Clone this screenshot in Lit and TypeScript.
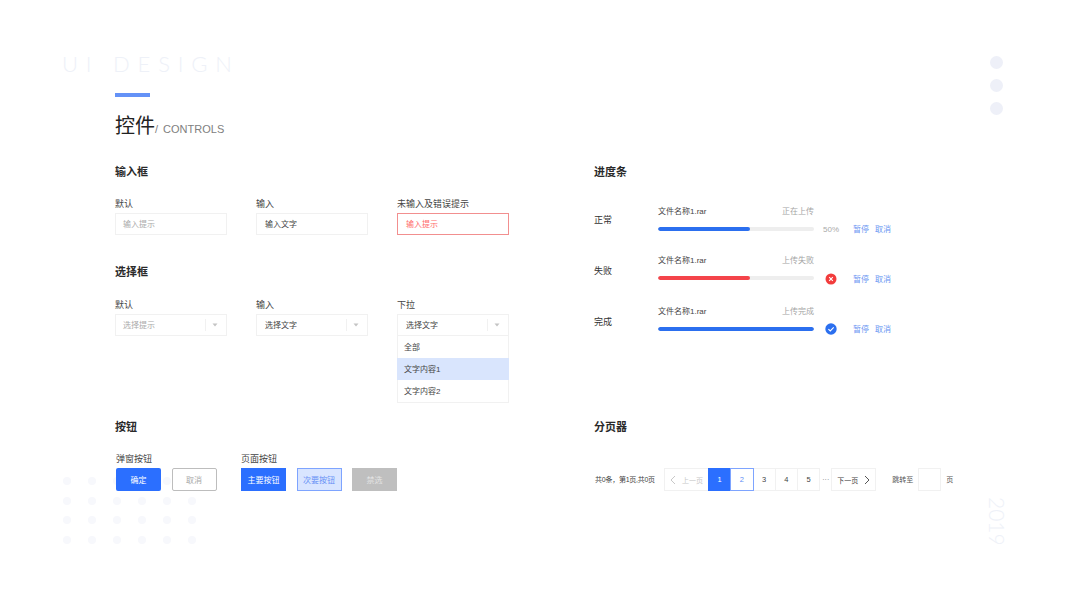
import { LitElement, html, css } from "lit";
import { customElement } from "lit/decorators.js";

const caret = html`<svg class="caret" width="6" height="4" viewBox="0 0 6 4"><path d="M0.5 0.5h5L3 3.5z" fill="#c4c4c4"/></svg>`;
const chevL = html`<svg width="6" height="10" viewBox="0 0 6 10"><path d="M5 1L1 5l4 4" fill="none" stroke="#c8c8c8" stroke-width="1"/></svg>`;
const chevR = html`<svg width="6" height="10" viewBox="0 0 6 10"><path d="M1 1l4 4-4 4" fill="none" stroke="#555" stroke-width="1"/></svg>`;
const errIcon = html`<svg width="12" height="12" viewBox="0 0 12 12"><circle cx="6" cy="6" r="5.5" fill="#f23c3c"/><path d="M4.2 4.2l3.6 3.6M7.8 4.2l-3.6 3.6" stroke="#fff" stroke-width="1.1"/></svg>`;
const okIcon = html`<svg width="12" height="12" viewBox="0 0 12 12"><circle cx="6" cy="6" r="5.7" fill="#2b6fef"/><path d="M3.4 6.1l1.9 1.9 3.4-3.6" fill="none" stroke="#fff" stroke-width="1.1"/></svg>`;

@customElement("app-root")
export class AppRoot extends LitElement {
  static styles = css`
    :host {
      display: block;
      position: relative;
      width: 1067px;
      height: 600px;
      overflow: hidden;
      background: #fff;
      font-family: "Liberation Sans", "Noto Sans CJK SC", sans-serif;
      color: #444;
    }
    .deco { position: absolute; }
    .brand {
      left: 62px; top: 50px;
      font: 300 22px/28px Lato, "Liberation Sans", sans-serif;
      letter-spacing: 7.8px;
      color: #eef1f8;
      white-space: pre;
    }
    .dots3 { left: 990px; top: 56px; display: flex; flex-direction: column; gap: 10px; }
    .dots3 i { display: block; width: 13px; height: 13px; border-radius: 50%; background: #eef0f8; }
    .year {
      left: 986px; top: 497px;
      writing-mode: vertical-rl;
      font: 300 21px/22px Lato, "Liberation Sans", sans-serif;
      color: #eef1f8;
    }
    .grid-dots {
      left: 63px; top: 477px;
      display: grid;
      grid-template-columns: repeat(6, 8px);
      grid-auto-rows: 8px;
      column-gap: 17px;
      row-gap: 11.7px;
    }
    .grid-dots i { border-radius: 50%; background: #f7f8fc; }

    .page { position: relative; padding: 93px 0 0 115px; }
    .bar { width: 35px; height: 4px; background: #6492f7; }
    .head { display: flex; align-items: baseline; height: 30px; margin-top: 14px; line-height: 30px; }
    .head b { font-weight: 400; font-size: 20px; color: #222; }
    .head span { font-size: 11px; color: #808080; word-spacing: 2px; }
    .main {
      display: grid;
      grid-template-columns: 479px 400px;
      margin-top: 23px;
    }
    h2 { margin: 0; font-size: 11px; line-height: 16px; font-weight: 700; color: #2a2a2a; }
    .mt29 { margin-top: 29px; }
    .mt17 { margin-top: 16px; }
    .fields { display: grid; grid-template-columns: repeat(3, 111.5px); column-gap: 29.5px; margin-top: 17px; }
    .fields.sel { margin-top: 18px; }
    .lab { font-size: 9px; line-height: 14px; color: #444; margin-bottom: 2px; white-space: nowrap; }
    .box {
      box-sizing: border-box;
      height: 22px;
      border: 1px solid #f1f1f1;
      display: flex;
      align-items: center;
      font-size: 8px;
      color: #444;
      padding: 0 0 1px 8px;
    }
    .box.ph { color: #aaa; padding-left: 7px; }
    .box.err { border-color: #f28f8f; color: #ff6a6a; }
    .box .text { flex: 1; }
    .box .arrow {
      width: 19px;
      height: 12px;
      border-left: 1px solid #f1f1f1;
      display: flex;
      align-items: center;
      justify-content: center;
      margin-right: 1px;
    }
    .menu { border: 1px solid #f1f1f1; border-top: 0; box-sizing: border-box; }
    .menu div { box-sizing: border-box; height: 22px; display: flex; align-items: center; padding: 0 0 1px 6px; font-size: 8px; color: #444; }
    .menu .on { background: #d9e5fd; margin: 0 -1px; padding-left: 7px; }

    .btn-groups { display: flex; margin-top: 17px; }
    .group + .group { margin-left: 24.5px; }
    .btns { display: flex; gap: 10.5px; }
    .btn {
      box-sizing: border-box;
      width: 45px;
      height: 23px;
      display: flex;
      align-items: center;
      justify-content: center;
      font-size: 8px;
      padding-bottom: 1px;
      border: 1px solid transparent;
    }
    .btn.round { border-radius: 2px; }
    .modal { margin-left: 1px; }
    .primary { background: #2b6fff; color: #fff; }
    .ghost { border-color: #bdbdbd; color: #a8a8a8; background: #fff; }
    .second { background: #d9e5ff; border-color: #7ea4ff; color: #6690f5; }
    .off { background: #bfbfbf; color: #e4e4e4; }

    .rows { margin-top: 25px; }
    .row { display: grid; grid-template-columns: 64px 156px 34px auto; grid-template-rows: 17px 14px; height: 32px; }
    .row.r2 { margin-top: 17px; }
    .row.r3 { margin-top: 19px; }
    .rname { grid-row: 1 / 3; align-self: center; font-size: 9px; line-height: 14px; color: #333; padding-bottom: 2px; }
    .r2 .rname, .r3 .rname { padding-top: 4px; }
    .fn { display: flex; justify-content: space-between; font-size: 8px; line-height: 14px; color: #444; }
    .fn em { font-style: normal; color: #a5a5a5; }
    .fncell { grid-row: 1; grid-column: 2; }
    .barcell { grid-row: 2; grid-column: 2; display: flex; align-items: center; }
    .track { flex: 1; height: 4px; border-radius: 2px; background: #eee; overflow: hidden; }
    .track i { display: block; height: 100%; border-radius: 2px; }
    .blue { background: #2b6fef; }
    .red { background: #f4444a; }
    .stat { grid-row: 2; grid-column: 3; display: flex; align-items: center; justify-content: center; font-size: 8px; color: #aaa; }
    .r2 .stat { padding-top: 1px; }
    .acts { grid-row: 2; grid-column: 4; display: flex; gap: 6px; margin-left: 5px; padding-bottom: 2px; align-items: center; font-size: 8px; color: #6a96f2; }
    .r2 .acts { padding-bottom: 0; }

    .pager { display: flex; align-items: center; margin-top: 33px; margin-left: 1px; height: 23px; }
    .pager .sum { width: 69px; font-size: 7px; letter-spacing: -0.25px; color: #444; white-space: nowrap; padding-bottom: 1px; }
    .pg {
      box-sizing: border-box;
      height: 23px;
      width: 23.25px;
      border: 1px solid #f1f1f1;
      margin-left: -1px;
      display: flex;
      align-items: center;
      justify-content: center;
      font-size: 7.5px;
      color: #444;
      gap: 5px;
    }
    .pg.wide { width: 45px; margin-left: 0; font-size: 7px; gap: 6px; }
    .pg.prev { color: #c8c8c8; }
    .pg.cur { background: #2b6fff; border-color: #2b6fff; color: #fff; position: relative; }
    .pg.sel { border-color: #7ea4ff; color: #5f8cf5; position: relative; }
    .more { width: 11px; text-align: center; font-size: 7px; color: #777; }
    .jump { margin-left: 16px; font-size: 7px; color: #555; padding-bottom: 1px; }
    .jbox { box-sizing: border-box; width: 23px; height: 23px; border: 1px solid #f1f1f1; margin: 0 5px; }
    .unit { font-size: 7px; color: #555; padding-bottom: 1px; }
  `;

  private field(label: string, text: string, cls: string) {
    return html`<div>
      <div class="lab">${label}</div>
      <div class="box ${cls}">${text}</div>
    </div>`;
  }

  private select(label: string, text: string, cls: string, menu = false) {
    return html`<div>
      <div class="lab">${label}</div>
      <div class="box ${cls}"><span class="text">${text}</span><span class="arrow">${caret}</span></div>
      ${menu
        ? html`<div class="menu">
            <div>全部</div>
            <div class="on">文字内容1</div>
            <div>文字内容2</div>
          </div>`
        : ""}
    </div>`;
  }

  private row(name: string, status: string, pct: number, color: string, stat: unknown, cls: string) {
    return html`<div class="row ${cls}">
      <div class="rname">${name}</div>
      <div class="fn fncell"><span>文件名称1.rar</span><em>${status}</em></div>
      <div class="barcell">
        <div class="track"><i class=${color} style="width:${pct}%"></i></div>
      </div>
      <div class="stat">${stat}</div>
      <div class="acts"><span>暂停</span><span>取消</span></div>
    </div>`;
  }

  render() {
    return html`
      <div class="deco brand">UI DESIGN</div>
      <div class="deco dots3"><i></i><i></i><i></i></div>
      <div class="deco year">2019</div>
      <div class="deco grid-dots">${Array.from({ length: 24 }, () => html`<i></i>`)}</div>
      <div class="page">
        <div class="bar"></div>
        <div class="head"><b>控件</b><span>/ CONTROLS</span></div>
        <div class="main">
          <div>
            <h2>输入框</h2>
            <div class="fields">
              ${this.field("默认", "输入提示", "ph")}
              ${this.field("输入", "输入文字", "")}
              ${this.field("未输入及错误提示", "输入提示", "err")}
            </div>
            <h2 class="mt29">选择框</h2>
            <div class="fields sel">
              ${this.select("默认", "选择提示", "ph")}
              ${this.select("输入", "选择文字", "")}
              ${this.select("下拉", "选择文字", "", true)}
            </div>
          </div>
          <div>
            <h2>进度条</h2>
            <div class="rows">
              ${this.row("正常", "正在上传", 59, "blue", "50%", "")}
              ${this.row("失败", "上传失败", 59, "red", errIcon, "r2")}
              ${this.row("完成", "上传完成", 100, "blue", okIcon, "r3")}
            </div>
          </div>
          <div class="mt17">
            <h2>按钮</h2>
            <div class="btn-groups">
              <div class="group modal">
                <div class="lab">弹窗按钮</div>
                <div class="btns">
                  <div class="btn round primary">确定</div>
                  <div class="btn round ghost">取消</div>
                </div>
              </div>
              <div class="group">
                <div class="lab">页面按钮</div>
                <div class="btns">
                  <div class="btn primary">主要按钮</div>
                  <div class="btn second">次要按钮</div>
                  <div class="btn off">禁选</div>
                </div>
              </div>
            </div>
          </div>
          <div class="mt17">
            <h2>分页器</h2>
            <div class="pager">
              <div class="sum">共0条，第1页,共0页</div>
              <div class="pg wide prev">${chevL}<span>上一页</span></div>
              <div class="pg cur">1</div>
              <div class="pg sel">2</div>
              <div class="pg">3</div>
              <div class="pg">4</div>
              <div class="pg">5</div>
              <div class="more">···</div>
              <div class="pg wide"><span>下一页</span>${chevR}</div>
              <div class="jump">跳转至</div>
              <div class="jbox"></div>
              <div class="unit">页</div>
            </div>
          </div>
        </div>
      </div>
    `;
  }
}
